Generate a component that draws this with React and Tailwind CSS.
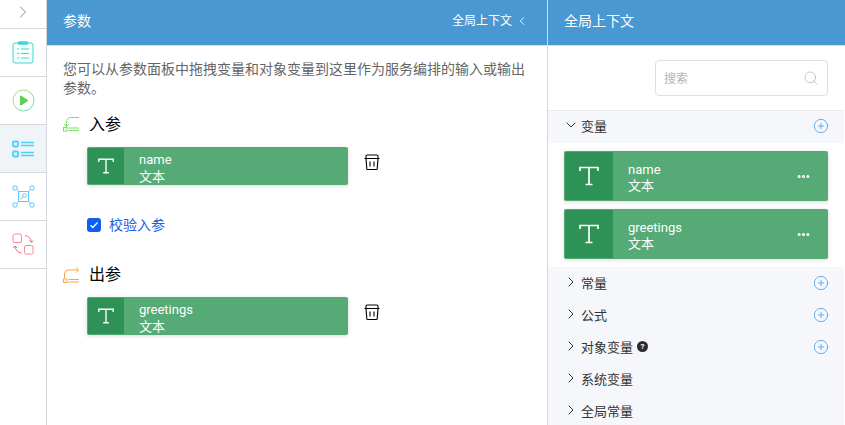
import { ChevronRight, ChevronLeft, ChevronDown, CirclePlus, Search, Ellipsis } from 'lucide-react'

const font = { fontFamily: 'Roboto, "Noto Sans CJK SC", sans-serif' }

function ClipboardIcon() {
  return (
    <svg width="22" height="23" viewBox="0 0 22 23" fill="#f4fdfc" stroke="#3fd8d4" strokeWidth="1">
      <rect x="1" y="2" width="20" height="20" rx="2" />
      <rect x="6" y="0.800" width="10" height="2.400" rx="1" fill="#3fd8d4" />
      <path d="M5 8h2M9 8h8M5 12.500h2M9 12.500h8M5 17h2M9 17h8" strokeWidth="1.200" />
    </svg>
  )
}

function PlayIcon() {
  return (
    <svg width="23" height="23" viewBox="0 0 23 23" fill="none">
      <defs>
        <linearGradient id="playRing" x1="0" y1="0" x2="1" y2="1">
          <stop offset="0" stopColor="#b6e26a" />
          <stop offset="1" stopColor="#5fd8c0" />
        </linearGradient>
      </defs>
      <circle cx="11.500" cy="11.500" r="10.500" stroke="url(#playRing)" strokeWidth="1" />
      <path d="M8 7.500a1 1 0 0 1 1.500-.8l6 4a1 1 0 0 1 0 1.600l-6 4a1 1 0 0 1-1.500-.8z" fill="#62cf52" />
    </svg>
  )
}

function ListIcon() {
  return (
    <svg width="23" height="18" viewBox="0 0 23 18" fill="none" stroke="#4cd0fb" strokeWidth="1.800">
      <rect x="1" y="1.500" width="5" height="5" rx="1" />
      <rect x="1" y="11.500" width="5" height="5" rx="1" />
      <path d="M9 2.500h13M9 5.500h13M9 12.500h13M9 15.500h13" strokeWidth="1.400" />
    </svg>
  )
}

function NodesIcon() {
  return (
    <svg width="23" height="23" viewBox="0 0 23 23" fill="none" stroke="#62c6f8" strokeWidth="1">
      <rect x="1" y="1" width="4" height="4" rx="1" />
      <rect x="18" y="1" width="4" height="4" rx="1" />
      <rect x="1" y="18" width="4" height="4" rx="1" />
      <rect x="18" y="18" width="4" height="4" rx="1" />
      <rect x="6.500" y="6.500" width="10" height="10" />
      <path d="M5 5l1.500 1.500M18 5l-1.500 1.500M5 18l1.500-1.500M18 18l-1.500-1.500" />
      <circle cx="12.500" cy="10.500" r="1.800" />
      <path d="M11 12l-2.500 2.500" />
    </svg>
  )
}

function SwapIcon() {
  return (
    <svg width="23" height="23" viewBox="0 0 23 23" fill="none" stroke="#f98a94" strokeWidth="1">
      <rect x="1" y="1" width="8.500" height="8.500" rx="1.500" />
      <rect x="12.500" y="12.500" width="8.500" height="8.500" rx="1.500" />
      <path d="M13 2.500c3.500.5 6 3 6.500 6.500M17.500 7.500l2 2 2-2" stroke="#f56c77" />
      <path d="M9.500 20c-3.500-.5-6-3-6.500-6.500M1 15l2-2 2 2" stroke="#f56c77" />
    </svg>
  )
}

function InIcon() {
  return (
    <svg width="17" height="16" viewBox="0 0 17 16" fill="none" stroke="#7fdc66" strokeWidth="1">
      <path d="M16 .5H8A4.500 4.500 0 0 0 3.500 5V9.500M1 7l2.500 2.500L6 7" />
      <rect x="0.500" y="10.500" width="3.500" height="3.500" />
      <path d="M5.500 11h10.500M5.500 13.500h10.500" />
    </svg>
  )
}

function OutIcon() {
  return (
    <svg width="17" height="17" viewBox="0 0 17 17" fill="none" stroke="#f9a63c" strokeWidth="1">
      <path d="M1.500 11V7A4 4 0 0 1 5.500 3H15.500M13 .5L15.500 3L13 5.500" />
      <rect x="0.500" y="12" width="3.500" height="3.500" />
      <path d="M5.500 12.500h10.500M5.500 15h10.500" />
    </svg>
  )
}

function BinIcon() {
  return (
    <svg width="18" height="18" viewBox="0 0 18 18" fill="none" stroke="#000" strokeWidth="1.100">
      <path d="M1.500 5.500h15M3 5.500V3.200C3 2.500 3.500 2 4.200 2h9.600c.7 0 1.200.5 1.200 1.200v2.300" />
      <path d="M3 5.500l.8 10.200c0 .5.500.8 1 .8h8.400c.5 0 1-.3 1-.8L15 5.500" />
      <path d="M7 8.500v5M11 8.500v5" />
    </svg>
  )
}

// the type badge on a variable card, thin slab shape
function TypeIcon({ size }) {
  return (
    <svg width={size} height={size} viewBox="0 0 20 20" fill="none" stroke="#fff" strokeWidth="1.700">
      <path d="M1 5V1.500H19V5M1 1.500V5M10 1.500V18.500M6.500 18.500H13.500" />
    </svg>
  )
}

function VarCard({ name, big }) {
  return (
    <div
      className={`flex rounded-[2px] bg-[#55aa76] shadow-[0_1px_4px_rgba(0,0,0,0.15)] text-white ${big ? 'h-[50px]' : 'h-[38px]'}`}
    >
      <div className={`bg-[#2e9156] flex items-center justify-center my-px ml-px ${big ? 'w-[48px]' : 'w-[36px]'}`}>
        <TypeIcon size={big ? 20 : 16} />
      </div>
      <div className={`flex-1 flex flex-col justify-center text-[13px] pl-[15px] ${big ? 'pt-[3px] leading-[16px]' : 'pt-[4px] leading-[17px]'}`}>
        <span>{name}</span>
        <span>文本</span>
      </div>
      {big && (
        <div className="flex items-center pr-[17px]">
          <Ellipsis size={15} strokeWidth={3} />
        </div>
      )}
    </div>
  )
}

function Section({ label, add = true, help }) {
  return (
    <div className="h-8 flex items-center pl-[15px] pr-[15px] text-[13px] text-[#333]">
      <ChevronRight size={16} strokeWidth={1.300} className="text-[#111] -mt-1" />
      <span className="ml-[2px]">{label}</span>
      {help && (
        <span className="ml-1 -mt-[3px] w-[11px] h-[11px] rounded-full bg-[#2b2b2b] text-white text-[8px] leading-[11px] font-bold text-center">?</span>
      )}
      <span className="flex-1" />
      {add && <CirclePlus size={16} strokeWidth={1.300} className="text-[#4aa5f0] -mt-[3px]" />}
    </div>
  )
}

export default function App() {
  const navRows = [
    { icon: <ClipboardIcon /> },
    { icon: <PlayIcon /> },
    { icon: <ListIcon />, active: true },
    { icon: <NodesIcon /> },
    { icon: <SwapIcon /> },
  ]

  return (
    <div className="flex w-[845px] h-[425px] overflow-hidden bg-white" style={font}>
      {/* left rail */}
      <div className="w-[47px] shrink-0 border-r border-[#d5d8dc]">
        <div className="h-[29px] flex items-center justify-center border-b border-[#d5d8dc]">
          <ChevronRight size={20} strokeWidth={1.200} className="text-[#888] -mt-1" />
        </div>
        {navRows.map((row, i) => (
          <div
            key={i}
            className={`h-[48px] flex items-center justify-center border-b border-[#d5d8dc] ${row.active ? 'bg-[#eef4f8]' : ''}`}
          >
            {row.icon}
          </div>
        ))}
      </div>

      {/* parameters */}
      <div className="w-[501px] shrink-0 border-r border-[#d5d8dc]">
        <div className="h-[46px] bg-[#4a98d1] border-b border-[#cfe0ee] flex items-center justify-between pl-4 pr-[18px] pb-[3px] text-white text-sm">
          <span>参数</span>
          <span className="flex items-center gap-[3px] text-xs">
            全局上下文
            <ChevronLeft size={14} strokeWidth={1.500} />
          </span>
        </div>
        <div className="pl-4 pr-5 pt-[14px]">
          <p className="text-sm leading-[19px] text-[#666]">
            您可以从参数面板中拖拽变量和对象变量到这里作为服务编排的输入或输出参数。
          </p>

          <div className="flex items-center mt-[15px] h-[24px]">
            <InIcon />
            <span className="ml-[9px] text-base text-black">入参</span>
          </div>
          <div className="flex items-start pl-[24px] mt-[10px]">
            <div className="w-[261px]">
              <VarCard name="name" />
            </div>
            <div className="ml-[15px] mt-[6px]">
              <BinIcon />
            </div>
          </div>

          <label className="flex items-center pl-[24px] mt-[30px] h-[20px]">
            <span className="w-[14px] h-[14px] rounded-[3px] bg-[#0d5ff5] flex items-center justify-center">
              <svg width="10" height="10" viewBox="0 0 10 10" fill="none" stroke="#fff" strokeWidth="1.300">
                <path d="M1.500 5.200l2.300 2.300 4.700-5" />
              </svg>
            </span>
            <span className="ml-2 text-sm text-[#1660e8]">校验入参</span>
          </label>

          <div className="flex items-center mt-[28px] h-[24px]">
            <OutIcon />
            <span className="ml-[9px] text-base text-black">出参</span>
          </div>
          <div className="flex items-start pl-[24px] mt-[10px]">
            <div className="w-[261px]">
              <VarCard name="greetings" />
            </div>
            <div className="ml-[15px] mt-[6px]">
              <BinIcon />
            </div>
          </div>
        </div>
      </div>

      {/* global context */}
      <div className="flex-1 min-w-0">
        <div className="h-[46px] bg-[#4a98d1] border-b border-[#cfe0ee] flex items-center pl-4 pb-[3px] text-white text-sm">
          全局上下文
        </div>
        <div className="h-[64px] flex items-start justify-end pt-[14px] pr-[17px]">
          <div className="w-[173px] h-9 rounded-[4px] border border-[#dcdfe6] flex items-center justify-between pl-2 pr-2 pt-[2px] text-xs text-[#b4b4b4]">
            <span>搜索</span>
            <Search size={16} strokeWidth={1} className="text-[#aaa] -mt-[2px]" />
          </div>
        </div>
        <div className="border-t border-[#e8ebef] mr-px">
          <div className="h-8 bg-[#f5f7fa] flex items-center pl-[15px] pr-[15px] text-[13px] text-[#333]">
            <ChevronDown size={16} strokeWidth={1.300} className="text-[#111] -mt-1" />
            <span className="ml-[2px]">变量</span>
            <span className="flex-1" />
            <CirclePlus size={16} strokeWidth={1.300} className="text-[#4aa5f0] -mt-[2px]" />
          </div>
          <div className="px-4 pt-[8px] pb-2 flex flex-col gap-2">
            <VarCard name="name" big />
            <VarCard name="greetings" big />
          </div>
          <div className="bg-[#f5f7fa] pt-px">
            <Section label="常量" />
            <Section label="公式" />
            <Section label="对象变量" help />
            <Section label="系统变量" add={false} />
            <Section label="全局常量" add={false} />
          </div>
        </div>
      </div>
    </div>
  )
}
